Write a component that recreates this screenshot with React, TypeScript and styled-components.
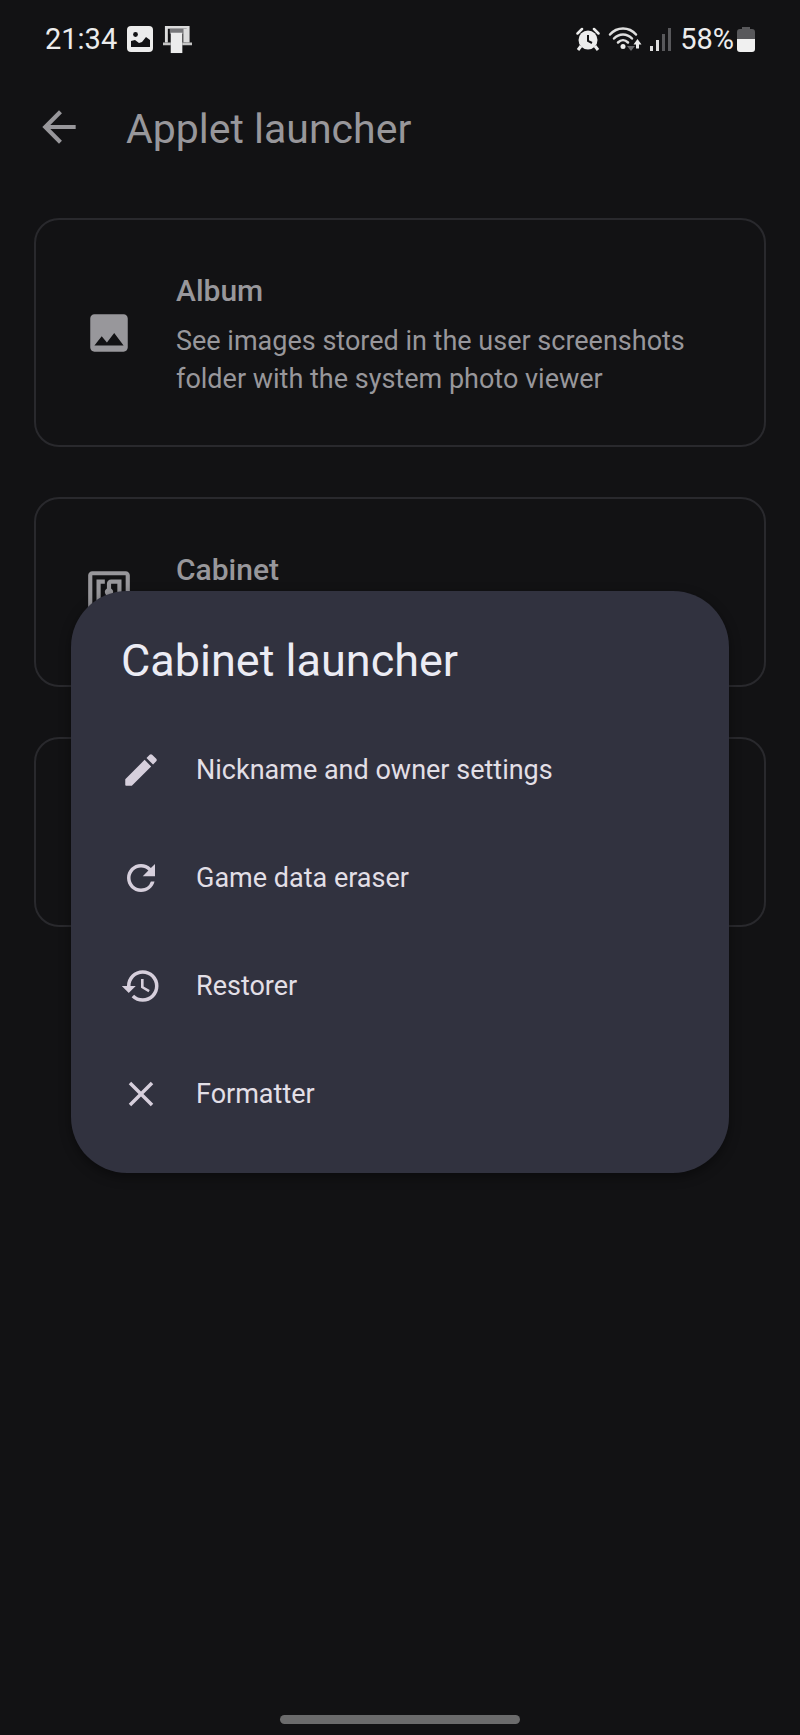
import React from "react";
import styled, { createGlobalStyle } from "styled-components";
import {
  MdArrowBack,
  MdClose,
  MdHistory,
  MdImage,
  MdNfc,
  MdRefresh,
} from "react-icons/md";

const GlobalStyle = createGlobalStyle`
  *, *::before, *::after { box-sizing: border-box; }
  body {
    margin: 0;
    background: #121214;
    font-family: Roboto, "Liberation Sans", sans-serif;
  }
  h1, h2, h3, p, ul { margin: 0; padding: 0; }
  button { font: inherit; color: inherit; background: none; border: 0; padding: 0; }
  svg { display: block; flex: none; }
`;

const Screen = styled.div`
  position: relative;
  display: flex;
  flex-direction: column;
  min-height: 100vh;
  background: #121214;
  color: #98979b;
`;

const StatusBar = styled.div`
  display: flex;
  align-items: center;
  justify-content: space-between;
  height: 78px;
  padding: 0 45px;
  color: #ececec;
  font-size: 29px;
  line-height: 34px;
`;

const StatusGroup = styled.div<{ $gap: number }>`
  display: flex;
  align-items: center;
  gap: ${(p) => p.$gap}px;
`;

const AppBar = styled.header`
  display: flex;
  align-items: center;
  gap: 42px;
  height: 98px;
  padding: 0 34px;
`;

const BackButton = styled.button`
  display: flex;
`;

const PageTitle = styled.h1`
  padding-top: 4px;
  font-size: 41px;
  line-height: 50px;
  font-weight: 400;
`;

const CardList = styled.main`
  display: flex;
  flex-direction: column;
  gap: 50px;
  padding: 42px 34px;
`;

const Card = styled.section`
  display: flex;
  align-items: center;
  gap: 42px;
  min-height: 190px;
  padding: 47px 48px;
  border: 2px solid #29292d;
  border-radius: 25px;
`;

const CardText = styled.div`
  display: flex;
  flex-direction: column;
  flex: 1;
  align-self: stretch;
  gap: 7px;
`;

const CardTitle = styled.h2`
  font-size: 30px;
  line-height: 48px;
  font-weight: 500;
`;

const CardDescription = styled.p`
  font-size: 27px;
  line-height: 38px;
`;

const NavigationBar = styled.div`
  display: flex;
  justify-content: center;
  margin-top: auto;
  padding-bottom: 11px;
`;

const HomeHandle = styled.div`
  width: 30%;
  height: 9px;
  border-radius: 5px;
  background: #6b6b6c;
`;

const Overlay = styled.div`
  position: absolute;
  inset: 0;
  display: flex;
  align-items: center;
  justify-content: center;
  padding: 78px 71px 50px;
`;

const Dialog = styled.div`
  width: 100%;
  padding: 42px 0 25px;
  border-radius: 56px;
  background: #31323f;
  box-shadow: 0 4px 12px rgba(0, 0, 0, 0.4);
`;

const DialogTitle = styled.h2`
  padding: 0 50px;
  margin-bottom: 27px;
  color: #ececf4;
  font-size: 45px;
  line-height: 56px;
  font-weight: 400;
`;

const ActionList = styled.ul`
  list-style: none;
`;

const Action = styled.button`
  display: flex;
  align-items: center;
  gap: 34px;
  width: 100%;
  height: 108px;
  padding: 0 49px;
  color: #d6cfdc;
  font-size: 27px;
  line-height: 38px;
  text-align: left;
`;

const ActionLabel = styled.span`
  color: #e2dfe6;
`;

const PictureIcon = () => (
  <svg width="26" height="26" viewBox="0 0 26 26" aria-hidden="true">
    <rect width="26" height="26" rx="4" fill="#ececec" />
    <circle cx="8.500" cy="8.500" r="2.400" fill="#121214" />
    <path d="M4 21v-6l4-1 4 3 3-1 4-5 4 3v7z" fill="#121214" />
  </svg>
);

const CabinetIcon = () => (
  <svg width="29" height="29" viewBox="0 0 30 30" aria-hidden="true">
    <path d="M3.500 18V2.500H26V18" fill="none" stroke="#dcdcdc" strokeWidth="3" />
    <path d="M0 19.500h8M20 19.500h10" stroke="#c4c4c4" strokeWidth="3" />
    <path d="M7 4h14v5H7z" fill="#77777a" />
    <path d="M21 4h4v14h-4z" fill="#dcdcdc" />
    <rect x="8" y="8" width="12" height="21" fill="#ececec" />
  </svg>
);

const AlarmIcon = () => (
  <svg width="24" height="24" viewBox="0 0 24 24" aria-hidden="true">
    <path d="M1.500 6.500L6 2M22.500 6.500L18 2" stroke="#ececec" strokeWidth="2.500" strokeLinecap="round" />
    <path d="M5 19l-3 4M19 19l3 4" stroke="#ececec" strokeWidth="3" />
    <circle cx="12" cy="13" r="9.500" fill="#ececec" />
    <path d="M12 8v6l4 2" fill="none" stroke="#121214" strokeWidth="2" />
  </svg>
);

const WifiIcon = () => (
  <svg width="34" height="26" viewBox="0 0 34 26" aria-hidden="true">
    <g fill="none" stroke="#dedede" strokeWidth="2.500" strokeLinecap="round">
      <path d="M2 8.500C9 0.500 21 0.500 28 8.500" />
      <path d="M6 12.500c5-5.500 13-5.500 18 0" />
      <path d="M10 16.500c3-3 7-3 10 0" />
    </g>
    <circle cx="15" cy="20.500" r="2.500" fill="#ececec" />
    <path d="M19 20h8l-4 5z" fill="#66666a" />
    <path d="M25.500 18.500L29.500 13l4 5.500h-2.500v4h-3v-4z" fill="#ececec" />
  </svg>
);

const SignalIcon = () => (
  <svg width="22" height="23" viewBox="0 0 22 23" aria-hidden="true">
    <path d="M0 18h3v5H0zM6 12h3v11H6z" fill="#dedede" />
    <path d="M12 6h3v17h-3zM18 0h3v23h-3z" fill="#58585b" />
  </svg>
);

const BatteryIcon = () => (
  <svg width="18" height="25" viewBox="0 0 18 25" aria-hidden="true">
    <path d="M5 0h8v2h2a3 3 0 0 1 3 3v7H0V5a3 3 0 0 1 3-3h2z" fill="#58585b" />
    <path d="M0 12h18v10a3 3 0 0 1-3 3H3a3 3 0 0 1-3-3z" fill="#f0f0f0" />
  </svg>
);

const PencilIcon = ({ size }: { size: number }) => (
  <svg width={size} height={size} viewBox="0 0 24 24" fill="currentColor" aria-hidden="true">
    <path d="M3 17.460v3.040c0 .28.22.5.5.5h3.040c.13 0 .26-.05.35-.15L17.810 9.940l-3.750-3.750L3.150 17.100c-.1.1-.15.22-.15.36zM20.710 7.040c.39-.39.39-1.020 0-1.410l-2.340-2.340c-.39-.39-1.020-.39-1.410 0l-1.830 1.830 3.750 3.750 1.830-1.830z" />
  </svg>
);

const actions = [
  { label: "Nickname and owner settings", Icon: PencilIcon },
  { label: "Game data eraser", Icon: MdRefresh },
  { label: "Restorer", Icon: MdHistory },
  { label: "Formatter", Icon: MdClose },
];

export default function App() {
  return (
    <>
      <GlobalStyle />
      <Screen>
        <StatusBar>
          <StatusGroup $gap={10}>
            <span>21:34</span>
            <PictureIcon />
            <CabinetIcon />
          </StatusGroup>
          <StatusGroup $gap={8}>
            <AlarmIcon />
            <WifiIcon />
            <SignalIcon />
            <StatusGroup $gap={3}>
              <span>58%</span>
              <BatteryIcon />
            </StatusGroup>
          </StatusGroup>
        </StatusBar>

        <AppBar>
          <BackButton type="button" aria-label="Back">
            <MdArrowBack size={50} />
          </BackButton>
          <PageTitle>Applet launcher</PageTitle>
        </AppBar>

        <CardList>
          <Card>
            <MdImage size={50} />
            <CardText>
              <CardTitle>Album</CardTitle>
              <CardDescription>
                See images stored in the user screenshots folder with the system photo viewer
              </CardDescription>
            </CardText>
          </Card>
          <Card>
            <MdNfc size={50} />
            <CardText>
              <CardTitle>Cabinet</CardTitle>
            </CardText>
          </Card>
          <Card />
        </CardList>

        <NavigationBar>
          <HomeHandle />
        </NavigationBar>

        <Overlay>
          <Dialog role="dialog" aria-modal="true" aria-labelledby="launcher-title">
            <DialogTitle id="launcher-title">Cabinet launcher</DialogTitle>
            <ActionList>
              {actions.map(({ label, Icon }) => (
                <li key={label}>
                  <Action type="button">
                    <Icon size={42} />
                    <ActionLabel>{label}</ActionLabel>
                  </Action>
                </li>
              ))}
            </ActionList>
          </Dialog>
        </Overlay>
      </Screen>
    </>
  );
}
